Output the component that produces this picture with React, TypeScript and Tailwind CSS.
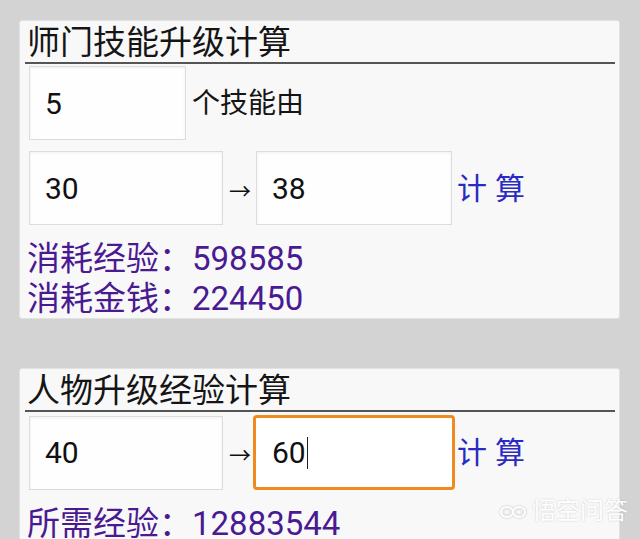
import React from "react";

const font = { fontFamily: "Roboto, 'Noto Sans CJK SC', 'Noto Sans', sans-serif" };

function Box({ value, w, focused }: { value: string; w: string; focused?: boolean }) {
  if (focused) {
    return (
      <div
        className={`${w} h-[75px] -ml-[3px] flex items-center pl-[16px] bg-white border-[3px] border-[#ef8a1e] rounded-[4px] text-[30px] text-[#111]`}
      >
        <span>{value}</span>
        <span className="w-px h-[32px] bg-[#222] ml-[1px]" />
      </div>
    );
  }
  return (
    <div
      className={`${w} h-[74px] flex items-center pl-[15px] bg-[#fefefe] border border-[#dcdcdc] shadow-[inset_0_1px_3px_rgba(0,0,0,0.06)] text-[30px] text-[#111]`}
    >
      {value}
    </div>
  );
}

function Title({ text }: { text: string }) {
  return (
    <div className="mx-[5px] mr-[4px] h-[43px] leading-[44px] pl-[2px] text-[33px] text-[#151515] border-b-2 border-[#555]">
      {text}
    </div>
  );
}

function CalcRow({ a, b, focused }: { a: string; b: string; focused?: boolean }) {
  return (
    <div className="flex items-center ml-[9px]">
      <Box value={a} w="w-[194px]" />
      <div className="w-[33px] text-center text-[22px] text-[#111] pl-[1px] mt-[6px]">→</div>
      {focused ? <Box value={b} w="w-[202px]" focused /> : <Box value={b} w="w-[196px]" />}
      <div className={`text-[30px] text-[#2b2bc4] ${focused ? "ml-[2px]" : "ml-[5px]"} tracking-[8px]`}>计算</div>
    </div>
  );
}

export default function App() {
  return (
    <div style={font} className="relative w-[640px] h-[539px] overflow-hidden bg-[#d3d3d3] pt-[20px] pl-[19px]">
      <div className="w-[601px] h-[299px] bg-[#f8f8f8] border border-[#e2e2e2] rounded-[3px]">
        <Title text="师门技能升级计算" />
        <div className="flex items-center ml-[9px] mt-[2px]">
          <Box value="5" w="w-[157px]" />
          <div className="ml-[6px] text-[28px] text-[#151515] mt-[2px]">个技能由</div>
        </div>
        <div className="mt-[11px]">
          <CalcRow a="30" b="38" />
        </div>
        <div className="mt-[14px] ml-[7px] text-[33px] leading-[40px] text-[#4a1a92]">
          <div>消耗经验：598585</div>
          <div>消耗金钱：224450</div>
        </div>
      </div>

      <div className="mt-[49px] w-[601px] h-[220px] bg-[#f8f8f8] border border-[#e2e2e2] rounded-[3px]">
        <Title text="人物升级经验计算" />
        <div className="mt-[3px]">
          <CalcRow a="40" b="60" focused />
        </div>
        <div className="mt-[14px] ml-[7px] text-[33px] leading-[40px] text-[#4a1a92]">
          <div>所需经验：12883544</div>
        </div>
      </div>

      <div className="absolute right-[12px] bottom-[10px] flex items-center gap-[6px] text-white text-[24px] [text-shadow:0_0_2px_rgba(0,0,0,0.2)]">
        <svg width="26" height="16" viewBox="0 0 26 16" className="drop-shadow-[0_0_1px_rgba(0,0,0,0.25)]">
          <ellipse cx="7" cy="9" rx="6" ry="5" fill="none" stroke="white" strokeWidth="2" />
          <ellipse cx="19" cy="9" rx="6" ry="5" fill="none" stroke="white" strokeWidth="2" />
          <circle cx="7" cy="9" r="1.5" fill="white" />
          <circle cx="19" cy="9" r="1.5" fill="white" />
        </svg>
        <span>悟空问答</span>
      </div>
    </div>
  );
}
